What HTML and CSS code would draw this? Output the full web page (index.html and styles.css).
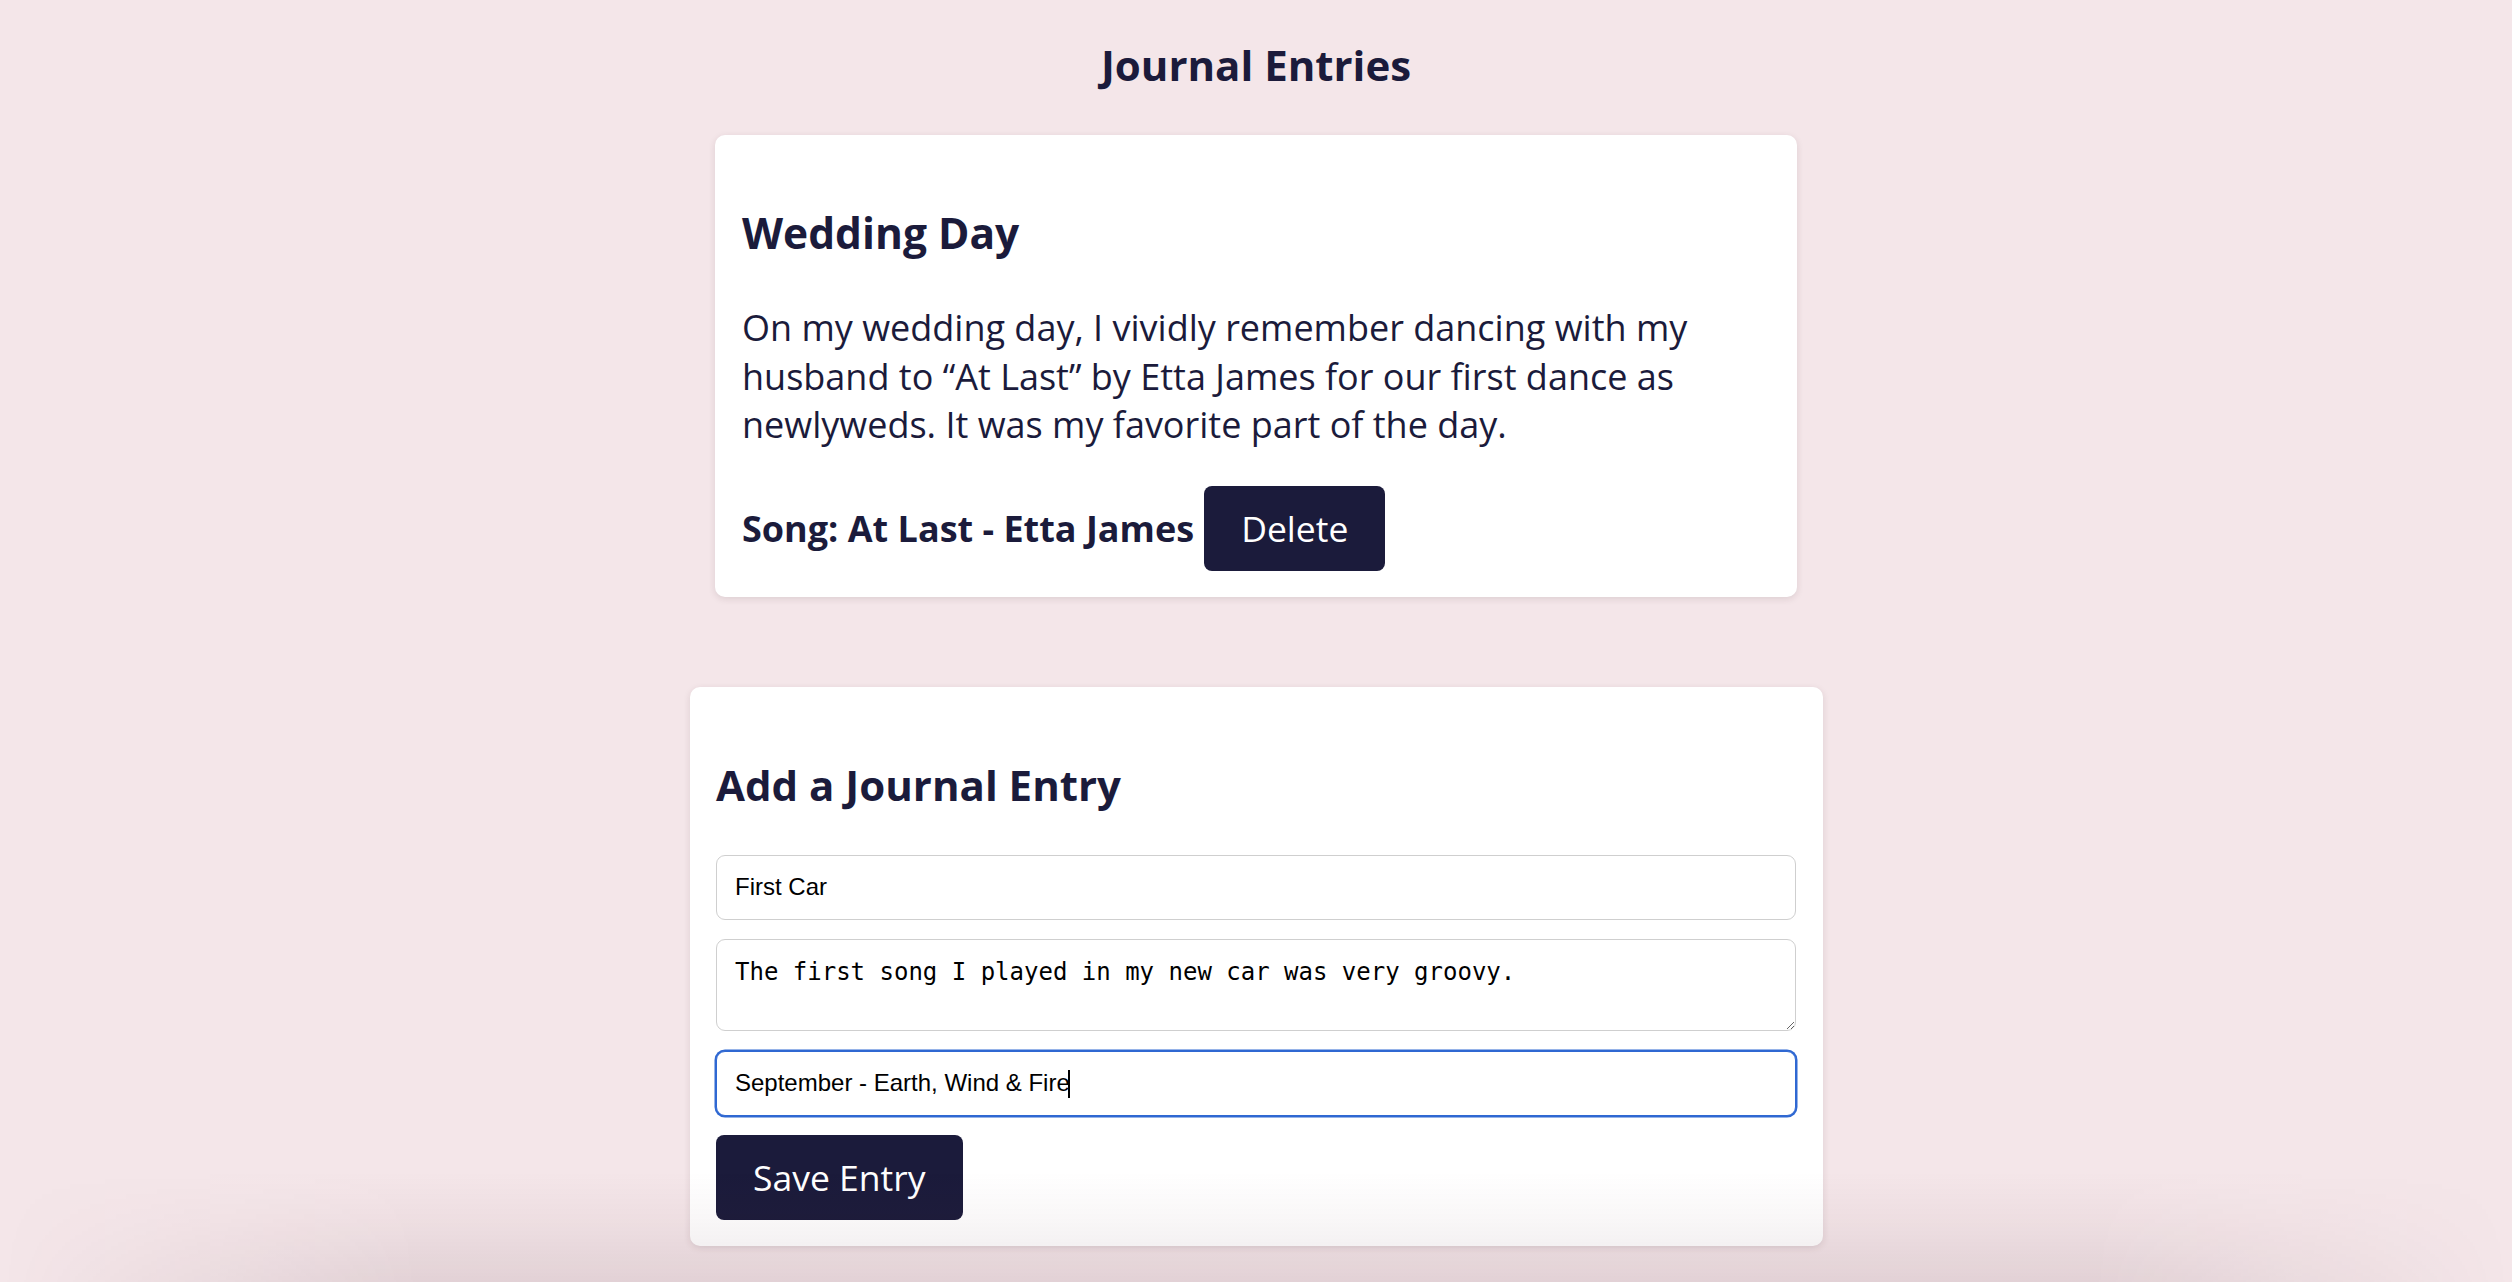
FILE: index.html
```html
<!DOCTYPE html>
<html lang="en">
<head>
<meta charset="utf-8">
<title>Journal Entries</title>
<link rel="stylesheet" href="styles.css">
</head>
<body>
<main class="page">
  <h1 class="page-title">Journal Entries</h1>

  <section class="entry-card">
    <h3 class="entry-title">Wedding Day</h3>
    <p class="entry-text">On my wedding day, I vividly remember dancing with my husband to “At Last” by Etta James for our first dance as newlyweds. It was my favorite part of the day.</p>
    <div class="entry-song">
      <strong class="song-label">Song: At Last - Etta James</strong>
      <button class="btn delete-btn" type="button">Delete</button>
    </div>
  </section>

  <section class="form-card">
    <h2 class="form-title">Add a Journal Entry</h2>
    <form class="entry-form">
      <input class="field" type="text" value="First Car">
      <textarea class="field field-area">The first song I played in my new car was very groovy.</textarea>
      <div class="focused-wrap">
        <input class="field field-focused" type="text" value="September - Earth, Wind &amp; Fire">
        <span class="caret"></span>
      </div>
      <button class="btn save-btn" type="button">Save Entry</button>
    </form>
  </section>
</main>
<div class="window-shade"></div>
</body>
</html>
```

FILE: styles.css
```css
* { box-sizing: border-box; }

html, body {
  margin: 0;
  padding: 0;
}

body {
  background: #f4e6e9;
  color: #1b1b3b;
  font-family: "Open Sans", "Noto Sans", sans-serif;
  min-height: 1282px;
}

.page {
  display: flex;
  flex-direction: column;
  align-items: center;
}

.page-title {
  font-size: 42px;
  font-weight: 700;
  line-height: 57px;
  margin: 36px 0 0;
}

.entry-card {
  width: 1082px;
  margin-top: 42px;
  background: #fff;
  border-radius: 10px;
  padding: 69px 27px 26px;
  box-shadow: 0 2px 7px rgba(60, 30, 40, 0.12);
}

.entry-title {
  font-size: 42.5px;
  font-weight: 700;
  line-height: 57px;
  margin: 0 0 43px;
}

.entry-text {
  font-size: 36px;
  line-height: 48.5px;
  margin: 0 0 36px;
}

.entry-song {
  display: flex;
  align-items: baseline;
  gap: 10px;
}

.song-label {
  font-size: 36px;
  font-weight: 700;
}

.btn {
  font-family: "Open Sans", "Noto Sans", sans-serif;
  font-size: 35.5px;
  line-height: 49px;
  color: #fff;
  background: #1b1b3b;
  border: none;
  border-radius: 8px;
  padding: 18px 37px;
}

.form-card {
  width: 1133px;
  margin-top: 90px;
  background: #fff;
  border-radius: 10px;
  padding: 69px 26.5px 26px;
  box-shadow: 0 2px 7px rgba(60, 30, 40, 0.12);
}

.form-title {
  font-size: 42px;
  font-weight: 700;
  line-height: 57px;
  margin: 0 0 42px;
}

.entry-form {
  display: flex;
  flex-direction: column;
  gap: 19.5px;
}

.field {
  display: block;
  width: 100%;
  height: 65px;
  font-family: "Liberation Sans", Arial, sans-serif;
  font-size: 24px;
  color: #000;
  background: #fff;
  border: 1.5px solid #cfcfcf;
  border-radius: 9px;
  padding: 0 18px;
  outline: none;
}

.field-area {
  height: 92px;
  padding: 18px 18px;
  font-family: "DejaVu Sans Mono", "Liberation Mono", monospace;
  font-size: 24px;
  line-height: 28px;
  resize: vertical;
}

.focused-wrap {
  position: relative;
}

.field-focused {
  border: 1.5px solid #2f68d2;
  box-shadow: 0 0 0 1.5px #2f68d2;
}

.caret {
  position: absolute;
  left: 352px;
  top: 19px;
  width: 1.5px;
  height: 28px;
  background: #000;
}

.save-btn {
  align-self: flex-start;
}

.window-shade {
  position: fixed;
  left: 0;
  right: 0;
  bottom: 0;
  height: 110px;
  pointer-events: none;
  background: linear-gradient(to bottom, rgba(90, 40, 55, 0) 0%, rgba(90, 40, 55, 0.04) 45%, rgba(70, 30, 45, 0.1) 100%);
  -webkit-mask-image: linear-gradient(to right, transparent 0, #000 420px, #000 calc(100% - 420px), transparent 100%);
  mask-image: linear-gradient(to right, transparent 0, #000 420px, #000 calc(100% - 420px), transparent 100%);
}
```
